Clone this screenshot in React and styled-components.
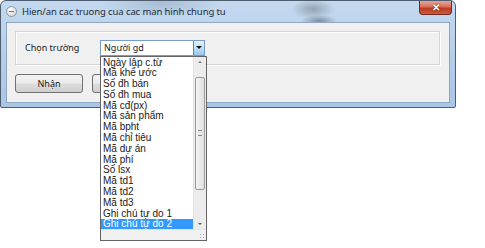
import React from "react";
import styled, { createGlobalStyle } from "styled-components";

const GlobalStyle = createGlobalStyle`
  body {
    margin: 0;
    background: #ffffff;
  }
`

const Page = styled.div`
  width: 485px;
  height: 248px;
  position: relative;
  overflow: hidden;
  font-family: "Liberation Sans", Arial, sans-serif;
`

const Window = styled.div`
  width: 456px;
  height: 108px;
  box-sizing: border-box;
  border: 1px solid #4d5d70;
  border-radius: 6px 6px 2px 2px;
  background:
    radial-gradient(ellipse 22px 10px at 312px 8px, rgba(90, 100, 110, 0.45), transparent),
    radial-gradient(ellipse 18px 6px at 318px 20px, rgba(60, 70, 80, 0.5), transparent),
    radial-gradient(ellipse 60px 14px at 160px 2px, rgba(120, 140, 160, 0.35), transparent),
    linear-gradient(180deg, #c4d9ef 0%, #b2cde9 60%, #a9c6e6 100%);
  display: flex;
  flex-direction: column;
  padding: 0 5px 4px 5px;
`

const TitleBar = styled.div`
  height: 21px;
  display: flex;
  align-items: center;
  gap: 5px;
  position: relative;
`

const TitleIcon = styled.div`
  width: 9px;
  height: 9px;
  border-radius: 50%;
  background: radial-gradient(circle at 40% 35%, #ffffff, #c9ccd0);
  border: 1px solid #8f969e;
  display: flex;
  align-items: center;
  justify-content: center;
  &::after {
    content: "";
    width: 5px;
    height: 1px;
    background: #6a7078;
  }
`

const TitleText = styled.span`
  font-family: "Noto Sans", sans-serif;
  font-size: 9.5px;
  color: #1e2b3a;
  letter-spacing: -0.1px;
`

const CloseButton = styled.div`
  position: absolute;
  right: -2px;
  top: 0;
  width: 33px;
  height: 14px;
  box-sizing: border-box;
  border: 1px solid #6f2a20;
  border-top: none;
  border-radius: 0 0 4px 4px;
  background: linear-gradient(180deg, #e9a597 0%, #d4705c 45%, #bb3a22 55%, #cc5a3e 100%);
  color: #ffffff;
  font-size: 10px;
  font-weight: 700;
  display: flex;
  align-items: center;
  justify-content: center;
  text-shadow: 0 0 2px #5a1a10;
`

const Client = styled.div`
  flex: 1;
  background: #f0f0f0;
  border: 1px solid #8fa7c2;
  display: flex;
  flex-direction: column;
  padding: 8px 9px 0 8px;
  gap: 9px;
`

const GroupBox = styled.div`
  height: 34px;
  box-sizing: border-box;
  border: 1px solid #d5d5d5;
  box-shadow: inset 1px 1px 0 #ffffff, 1px 1px 0 #ffffff;
  display: flex;
  align-items: center;
  padding: 0 0 1px 9px;
`

const Label = styled.span`
  font-family: "Noto Sans", sans-serif;
  font-size: 9px;
  color: #1a1a1a;
  width: 75px;
`

const Combo = styled.div`
  position: relative;
  width: 105px;
  height: 16px;
  box-sizing: border-box;
  border: 1px solid #7a9cc9;
  background: #ffffff;
  display: flex;
  align-items: center;
`

const ComboText = styled.span`
  flex: 1;
  font-family: "Noto Sans", sans-serif;
  font-size: 9px;
  color: #1a1a1a;
  padding-left: 3px;
`

const ComboArrow = styled.div`
  width: 11px;
  height: 14px;
  box-sizing: border-box;
  border-left: 1px solid #5c86b8;
  background: linear-gradient(180deg, #e3f1fc 0%, #bfe0f8 50%, #97c8ef 100%);
  display: flex;
  align-items: center;
  justify-content: center;
  &::after {
    content: "";
    border-left: 3px solid transparent;
    border-right: 3px solid transparent;
    border-top: 3px solid #111;
  }
`

const ListBox = styled.div`
  position: absolute;
  left: -1px;
  top: 15px;
  width: 107px;
  height: 185px;
  box-sizing: border-box;
  border: 1px solid #646464;
  background: #ffffff;
  display: flex;
  flex-direction: column;
  z-index: 5;
`

const ListBody = styled.div`
  flex: 1;
  display: flex;
  overflow: hidden;
`

const Items = styled.div`
  flex: 1;
  overflow: hidden;
  padding-top: 1px;
`

const Item = styled.div`
  font-size: 10px;
  line-height: 10.8px;
  height: 10.8px;
  padding-left: 2px;
  color: ${p => (p.$selected ? "#ffffff" : "#1a1a1a")};
  background: ${p => (p.$selected ? "#3399ff" : "transparent")};
  white-space: nowrap;
`

const ScrollBar = styled.div`
  width: 12px;
  background: #ececec;
  border-left: 1px solid #e2e2e2;
  display: flex;
  flex-direction: column;
  align-items: center;
`

const ScrollArrow = styled.div`
  width: 11px;
  height: 10px;
  display: flex;
  align-items: center;
  justify-content: center;
  &::after {
    content: "";
    border-left: 2px solid transparent;
    border-right: 2px solid transparent;
    ${p => (p.$down ? "border-top: 2px solid #555;" : "border-bottom: 2px solid #777;")}
  }
`

const Track = styled.div`
  flex: 1;
  width: 100%;
  display: flex;
  flex-direction: column;
  padding-top: 10px;
`

const Thumb = styled.div`
  height: 113px;
  margin: 0 1px;
  box-sizing: border-box;
  border: 1px solid #9a9a9a;
  border-radius: 2px;
  background: linear-gradient(90deg, #f4f4f4, #e0e0e0);
  display: flex;
  align-items: center;
  justify-content: center;
  &::after {
    content: "";
    width: 4px;
    height: 4px;
    border-top: 1px solid #888;
    border-bottom: 1px solid #888;
  }
`

const GripStrip = styled.div`
  height: 9px;
  background: #f0f0f0;
  border-top: 1px solid #e4e4e4;
  display: flex;
  justify-content: flex-end;
  align-items: flex-end;
  padding: 0 1px 1px 0;
`

const Grip = styled.div`
  width: 6px;
  height: 6px;
  background-image: radial-gradient(circle, #a0a0a0 0.8px, transparent 1px);
  background-size: 3px 3px;
`

const ButtonRow = styled.div`
  display: flex;
  gap: 9px;
`

const Button = styled.div`
  width: 68px;
  height: 19px;
  box-sizing: border-box;
  border: 1px solid #707070;
  border-radius: 3px;
  background: linear-gradient(180deg, #f2f2f2 0%, #ebebeb 48%, #dddddd 52%, #cfcfcf 100%);
  font-family: "Noto Sans", sans-serif;
  font-size: 9px;
  color: #1a1a1a;
  display: flex;
  align-items: center;
  justify-content: center;
`

const items = [
  "Ngày lập c.từ",
  "Mã khế ước",
  "Số đh bán",
  "Số đh mua",
  "Mã cđ(px)",
  "Mã sản phẩm",
  "Mã bpht",
  "Mã chỉ tiêu",
  "Mã dự án",
  "Mã phí",
  "Số lsx",
  "Mã td1",
  "Mã td2",
  "Mã td3",
  "Ghi chú tự do 1",
  "Ghi chú tự do 2",
  "Ghi chú tự do 3",
];

export default function App() {
  return (
    <Page>
      <GlobalStyle />
      <Window>
        <TitleBar>
          <TitleIcon />
          <TitleText>Hien/an cac truong cua cac man hinh chung tu</TitleText>
          <CloseButton>✕</CloseButton>
        </TitleBar>
        <Client>
          <GroupBox>
            <Label>Chọn trường</Label>
            <Combo>
              <ComboText>Người gd</ComboText>
              <ComboArrow />
              <ListBox>
                <ListBody>
                  <Items>
                    {items.map(it => (
                      <Item key={it} $selected={it === "Ghi chú tự do 2"}>{it}</Item>
                    ))}
                  </Items>
                  <ScrollBar>
                    <ScrollArrow />
                    <Track>
                      <Thumb />
                    </Track>
                    <ScrollArrow $down />
                  </ScrollBar>
                </ListBody>
                <GripStrip>
                  <Grip />
                </GripStrip>
              </ListBox>
            </Combo>
          </GroupBox>
          <ButtonRow>
            <Button>Nhận</Button>
            <Button>Hủy</Button>
          </ButtonRow>
        </Client>
      </Window>
    </Page>
  );
}
